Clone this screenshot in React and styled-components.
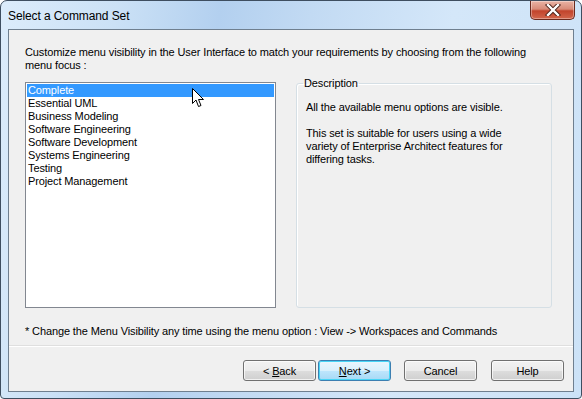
import React from 'react';
import styled, { createGlobalStyle } from 'styled-components';

const Global = createGlobalStyle`
  html, body { margin: 0; padding: 0; background: #fff; }
  body {
    font-family: "Liberation Sans", Arial, sans-serif;
    font-size: 11px;
    letter-spacing: -0.12px;
  }
`;

const Styled = {
  Window: styled.div`
    position: relative;
    box-sizing: border-box;
    width: 582px;
    height: 399px;
    border: 1px solid #3e4e60;
    border-radius: 7px 7px 4px 4px;
    background: linear-gradient(100deg, #dcecfb 0%, #cbe1f6 18%, #b3d0ef 34%, #c2daf3 48%, #d4e7f9 70%, #cce2f7 100%);
    display: flex;
    flex-direction: column;
    padding: 0 7px 6px 7px;
    overflow: hidden;
  `,
  TitleBar: styled.div`
    height: 28px;
    display: flex;
    align-items: flex-start;
    justify-content: space-between;
  `,
  Title: styled.div`
    font-family: "Liberation Sans", Arial, sans-serif;
    font-size: 12px;
    letter-spacing: -0.1px;
    color: #000;
    padding-top: 8px;
  `,
  Close: styled.div`
    width: 45px;
    height: 19px;
    margin-right: -1px;
    box-sizing: border-box;
    border: 1px solid #6b2a1e;
    border-top: none;
    border-radius: 0 0 5px 5px;
    background: linear-gradient(#eab3a5 0%, #d88b78 45%, #c2442c 55%, #d2664c 100%);
    display: flex;
    align-items: center;
    justify-content: center;
    box-shadow: inset 0 0 0 1px rgba(255,255,255,0.35);
  `,
  Client: styled.div`
    flex: 1;
    box-sizing: border-box;
    border: 1px solid #6f7f8f;
    background: #f0f0f0;
    display: flex;
    flex-direction: column;
  `,
  Body: styled.div`
    padding: 16px 20px 0 16px;
    display: flex;
    flex-direction: column;
    color: #000;
  `,
  Intro: styled.p`
    margin: 0 0 10px 0;
    line-height: 13px;
  `,
  Row: styled.div`
    display: flex;
    align-items: flex-start;
    gap: 20px;
  `,
  ListBox: styled.div`
    position: relative;
    box-sizing: border-box;
    width: 251px;
    height: 226px;
    border: 1px solid #828790;
    background: #fff;
    padding: 1px;
  `,
  Item: styled.div`
    height: 13px;
    line-height: 13px;
    padding-left: 1px;
    color: ${p => (p.selected ? '#fff' : '#000')};
    background: ${p => (p.selected ? '#3399ff' : 'transparent')};
  `,
  Group: styled.fieldset`
    box-sizing: border-box;
    width: 256px;
    height: 231px;
    margin: -5px 0 0 0;
    padding: 11px 9px 0 9px;
    border: 1px solid #d5dfe5;
    border-radius: 3px;
    box-shadow: inset 1px 1px 0 #fff;
  `,
  Legend: styled.legend`
    padding: 0 1px;
    margin-left: -3px;
    line-height: 13px;
  `,
  GroupText: styled.p`
    margin: 0 0 13px 0;
    line-height: 13px;
    width: 218px;
  `,
  Footnote: styled.div`
    margin-top: 17px;
    line-height: 13px;
  `,
  Separator: styled.div`
    margin-top: 7px;
    height: 1px;
    background: #dfdfdf;
    border-bottom: 1px solid #fff;
  `,
  Buttons: styled.div`
    display: flex;
    justify-content: flex-end;
    padding: 13px 9px 0 0;
  `,
  Button: styled.div`
    box-sizing: border-box;
    width: 73px;
    height: 21px;
    margin-left: ${p => p.gap}px;
    border: 1px solid ${p => (p.primary ? '#3c7fb1' : '#707070')};
    border-radius: 3px;
    background: ${p =>
      p.primary
        ? 'linear-gradient(#eaf6fd 0%, #d9f0fc 50%, #bee6fd 51%, #a7d9f5 100%)'
        : 'linear-gradient(#f2f2f2 0%, #ebebeb 50%, #dddddd 51%, #cfcfcf 100%)'};
    box-shadow: inset 0 0 0 1px ${p => (p.primary ? '#48d5f6' : 'rgba(255,255,255,0.7)')};
    display: flex;
    align-items: center;
    justify-content: center;
    white-space: pre;
    color: #000;
  `,
  Mnemonic: styled.span`
    text-decoration: underline;
  `,
  Cursor: styled.svg`
    position: absolute;
    left: 166px;
    top: 5px;
  `,
};

const items = [
  'Complete',
  'Essential UML',
  'Business Modeling',
  'Software Engineering',
  'Software Development',
  'Systems Engineering',
  'Testing',
  'Project Management',
];

export default function App() {
  return (
    <>
      <Global />
      <Styled.Window>
        <Styled.TitleBar>
          <Styled.Title>Select a Command Set</Styled.Title>
          <Styled.Close>
            <svg width="16" height="12" viewBox="0 0 16 12">
              <path d="M3 1 L13 11 M13 1 L3 11" stroke="#4a2018" strokeWidth="4.2" strokeLinecap="square" />
              <path d="M3 1 L13 11 M13 1 L3 11" stroke="#fff" strokeWidth="2.4" strokeLinecap="square" />
            </svg>
          </Styled.Close>
        </Styled.TitleBar>
        <Styled.Client>
          <Styled.Body>
            <Styled.Intro>
              Customize menu visibility in the User Interface to match your requirements by choosing from the following menu focus :
            </Styled.Intro>
            <Styled.Row>
              <Styled.ListBox>
                {items.map((it, i) => (
                  <Styled.Item key={it} selected={i === 0}>{it}</Styled.Item>
                ))}
                <Styled.Cursor width="13" height="20" viewBox="0 0 13 20">
                  <path d="M0.5 0.5 L0.5 15.5 L4 12 L6.5 18.5 L9 17.5 L6.5 11.5 L11.5 11.5 Z" fill="#fff" stroke="#000" strokeWidth="1" strokeLinejoin="miter" />
                </Styled.Cursor>
              </Styled.ListBox>
              <Styled.Group>
                <Styled.Legend>Description</Styled.Legend>
                <Styled.GroupText>All the available menu options are visible.</Styled.GroupText>
                <Styled.GroupText>
                  This set is suitable for users using a wide variety of Enterprise Architect features for differing tasks.
                </Styled.GroupText>
              </Styled.Group>
            </Styled.Row>
            <Styled.Footnote>
              * Change the Menu Visibility any time using the menu option : View -&gt; Workspaces and Commands
            </Styled.Footnote>
          </Styled.Body>
          <Styled.Separator />
          <Styled.Buttons>
            <Styled.Button gap={0}>{'< '}<Styled.Mnemonic>B</Styled.Mnemonic>ack</Styled.Button>
            <Styled.Button gap={2} primary><Styled.Mnemonic>N</Styled.Mnemonic>{'ext >'}</Styled.Button>
            <Styled.Button gap={13}>Cancel</Styled.Button>
            <Styled.Button gap={14}>Help</Styled.Button>
          </Styled.Buttons>
        </Styled.Client>
      </Styled.Window>
    </>
  );
}
